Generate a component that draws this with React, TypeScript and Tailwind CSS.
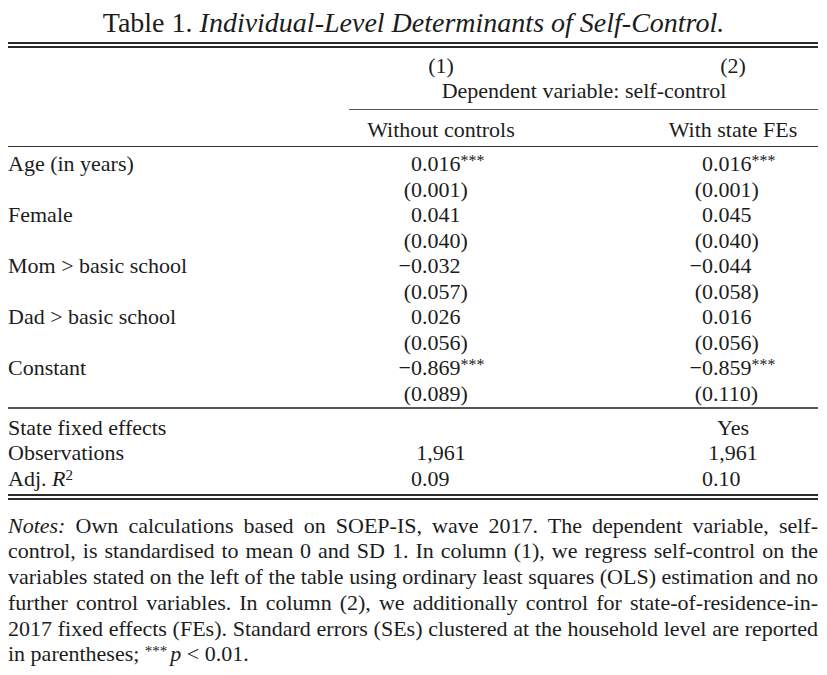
import React from "react";

type Cell = { int?: string; rest?: string; stars?: boolean; center?: string };

interface RowProps {
  label?: React.ReactNode;
  c1?: Cell;
  c2?: Cell;
}

const Stars = () => (
  <sup className="text-[16px] relative top-[-5px] leading-none">***</sup>
);

const Num = ({ cell, intWidth }: { cell?: Cell; intWidth: string }) => {
  if (!cell) return null;
  if (cell.center) return <div className="text-center">{cell.center}</div>;
  return (
    <div className="flex">
      <span className={`inline-block text-right ${intWidth}`}>{cell.int}</span>
      <span>
        {cell.rest}
        {cell.stars && <Stars />}
      </span>
    </div>
  );
};

const Row = ({ label, c1, c2 }: RowProps) => (
  <div className="flex h-[25.5px] leading-[25.5px] whitespace-nowrap">
    <div className="w-[342px]">{label}</div>
    <div className="w-[182px]">
      <Num cell={c1} intWidth="w-[72px]" />
    </div>
    <div className="w-[116px]" />
    <div className="w-[170px]">
      <Num cell={c2} intWidth="w-[65px]" />
    </div>
  </div>
);

const rows: RowProps[] = [
  { label: "Age (in years)", c1: { int: "0", rest: ".016", stars: true }, c2: { int: "0", rest: ".016", stars: true } },
  { c1: { int: "(0", rest: ".001)" }, c2: { int: "(0", rest: ".001)" } },
  { label: "Female", c1: { int: "0", rest: ".041" }, c2: { int: "0", rest: ".045" } },
  { c1: { int: "(0", rest: ".040)" }, c2: { int: "(0", rest: ".040)" } },
  { label: "Mom > basic school", c1: { int: "\u22120", rest: ".032" }, c2: { int: "\u22120", rest: ".044" } },
  { c1: { int: "(0", rest: ".057)" }, c2: { int: "(0", rest: ".058)" } },
  { label: "Dad > basic school", c1: { int: "0", rest: ".026" }, c2: { int: "0", rest: ".016" } },
  { c1: { int: "(0", rest: ".056)" }, c2: { int: "(0", rest: ".056)" } },
  { label: "Constant", c1: { int: "\u22120", rest: ".869", stars: true }, c2: { int: "\u22120", rest: ".859", stars: true } },
  { c1: { int: "(0", rest: ".089)" }, c2: { int: "(0", rest: ".110)" } },
];

const noteLines: React.ReactNode[] = [
  <>
    <i>Notes:</i> Own calculations based on SOEP-IS, wave 2017. The dependent variable, self-
  </>,
  "control, is standardised to mean 0 and SD 1. In column (1), we regress self-control on the",
  "variables stated on the left of the table using ordinary least squares (OLS) estimation and no",
  "further control variables. In column (2), we additionally control for state-of-residence-in-",
  "2017 fixed effects (FEs). Standard errors (SEs) clustered at the household level are reported",
];

export default function App() {
  return (
    <div className="w-[827px] h-[675px] bg-white text-[#1c1c1c] overflow-hidden font-['Liberation_Serif','Times_New_Roman',serif]">
      <div className="pt-[7px] text-center text-[28px] leading-[32px]">
        Table 1. <i>Individual-Level Determinants of Self-Control.</i>
      </div>

      <div className="mx-[8px] w-[810px] text-[22px]">
        <div className="mt-[3px] h-[1.5px] bg-[#2a2a2a]" />
        <div className="mt-[2.5px] h-[1.5px] bg-[#2a2a2a]" />

        <div className="flex h-[25.5px] leading-[25.5px] mt-[5px]">
          <div className="w-[342px]" />
          <div className="w-[182px] text-center">(1)</div>
          <div className="w-[116px]" />
          <div className="w-[170px] text-center">(2)</div>
        </div>
        <div className="flex h-[25.5px] leading-[25.5px]">
          <div className="w-[342px]" />
          <div className="flex-1 text-center">Dependent variable: self-control</div>
        </div>
        <div className="ml-[341px] mt-[5px] h-[1.5px] bg-[#555]" />
        <div className="flex h-[25.5px] leading-[25.5px] mt-[7px]">
          <div className="w-[342px]" />
          <div className="w-[182px] text-center">Without controls</div>
          <div className="w-[116px]" />
          <div className="w-[170px] text-center">With state FEs</div>
        </div>
        <div className="mt-[3px] h-[1.5px] bg-[#333]" />

        <div className="pt-[4px]">
          {rows.map((r, i) => (
            <Row key={i} {...r} />
          ))}
        </div>

        <div className="mt-[1px] h-[1.5px] bg-[#555]" />

        <div className="pt-[6px]">
          <Row label="State fixed effects" c2={{ center: "Yes" }} />
          <Row label="Observations" c1={{ center: "1,961" }} c2={{ center: "1,961" }} />
          <Row
            label={
              <>
                Adj. <i>R</i>
                <sup className="text-[15px] relative top-[-6px] leading-none">2</sup>
              </>
            }
            c1={{ int: "0", rest: ".09" }}
            c2={{ int: "0", rest: ".10" }}
          />
        </div>

        <div className="mt-[3px] h-[1.5px] bg-[#2a2a2a]" />
        <div className="mt-[2.5px] h-[1.5px] bg-[#2a2a2a]" />

        <div className="mt-[13px] leading-[25.8px]">
          {noteLines.map((l, i) => (
            <div key={i} className="whitespace-nowrap text-justify [text-align-last:justify]">
              {l}
            </div>
          ))}
          <div className="whitespace-nowrap">
            in parentheses; <sup className="text-[15px] relative top-[-5px] leading-none mr-[3px]">***</sup>
            <i>p</i> &lt; 0.01.
          </div>
        </div>
      </div>
    </div>
  );
}
